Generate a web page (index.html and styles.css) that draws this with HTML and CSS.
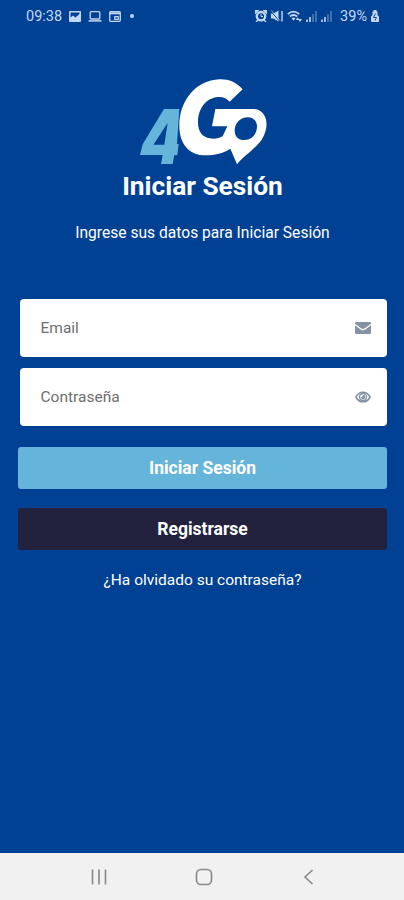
FILE: index.html
```html
<!DOCTYPE html>
<html lang="es">
<head>
    <title>4Go - Iniciar Sesión</title>
    <meta charset="UTF-8">
    <meta name="viewport" content="width=device-width, initial-scale=1.0">
    <link rel="stylesheet" href="styles.css">
</head>
<body>
    <header class="statusbar">
        <div class="status-left">
            <span class="clock">09:38</span>
            <svg width="12" height="11" viewBox="0 0 12 11">
                <path fill="currentColor" fill-rule="evenodd" d="M1 0h10a1 1 0 0 1 1 1v9a1 1 0 0 1-1 1H1a1 1 0 0 1-1-1V1a1 1 0 0 1 1-1zM1.500 6.500 4 4.500l2.500 2L10.500 3V1.500h-9z"/>
            </svg>
            <svg width="14" height="11" viewBox="0 0 14 11">
                <rect x="2.200" y=".7" width="9.600" height="7.300" rx="1" fill="none" stroke="currentColor" stroke-width="1.300"/>
                <path d="M.5 9.900h13" stroke="currentColor" stroke-width="1.500"/>
            </svg>
            <svg width="12" height="11" viewBox="0 0 12 11">
                <rect x=".7" y=".7" width="10.600" height="9.600" rx="1" fill="none" stroke="currentColor" stroke-width="1.300"/>
                <path d="M1 2.300h10" stroke="currentColor" stroke-width="2"/>
                <path d="M5.500 5.500h4v3h-4z" fill="currentColor" stroke="currentColor" fill-opacity=".4"/>
            </svg>
            <span class="dot"></span>
        </div>
        <div class="status-right">
            <svg width="12" height="12" viewBox="0 0 12 12">
                <path d="M0 0h3.500L0 3.500zM12 0H8.500L12 3.500zM1 12l2-2M11 12 9 10" fill="currentColor" stroke="currentColor" stroke-width="1.400"/>
                <circle cx="6" cy="6.200" r="4.200" fill="none" stroke="currentColor" stroke-width="2.400"/>
                <path d="M6 4v2.500h2" fill="none" stroke="currentColor"/>
            </svg>
            <svg width="12" height="12" viewBox="0 0 12 12">
                <path d="M0 3.500h2.500L7.500.5v11L2.500 8.500H0z" fill="currentColor"/>
                <path d="M0 1.500 8 10.500" stroke="#014193" stroke-width="1"/>
                <path d="M.3.500 9 10.500" stroke="currentColor" stroke-width=".8"/>
                <path d="M11 1v10.500" stroke="currentColor" stroke-width="1.400"/>
            </svg>
            <svg width="15" height="12" viewBox="0 0 15 12">
                <path d="M.8 4.200q5.700-5 11.400 0M2.800 6.500q3.700-3 7.400 0" fill="none" stroke="currentColor" stroke-width="1.700"/>
                <path d="M4.500 8.300q2-1.500 4 0l-2 2.500zM8.800 10l1.900-2.800L12.600 10zM11 9h4l-2 3z" fill="currentColor"/>
            </svg>
            <svg width="11" height="11" viewBox="0 0 11 11">
                <path d="M1 11V8.500M4 11V6" stroke="currentColor" stroke-width="1.600"/>
                <path d="M7 11V3M10 11V0" stroke="currentColor" stroke-width="1.600" opacity=".4"/>
            </svg>
            <svg width="11" height="11" viewBox="0 0 11 11">
                <path d="M1 11V8.500M4 11V6" stroke="currentColor" stroke-width="1.600"/>
                <path d="M7 11V3M10 11V0" stroke="currentColor" stroke-width="1.600" opacity=".4"/>
            </svg>
            <span class="battery-text">39%</span>
            <svg width="8" height="12" viewBox="0 0 8 12">
                <path d="M2.500 0h3v1.500h1V5L8 6.500V11a1 1 0 0 1-1 1H1a1 1 0 0 1-1-1V6.500L1.500 5V1.500h1z" fill="currentColor"/>
                <path d="M4.500 3.500 2.500 7.500h3L4 10.500" fill="none" stroke="#014193" stroke-width=".9"/>
            </svg>
        </div>
    </header>

    <main class="login">
        <svg class="logo" width="130" height="90" viewBox="54 36 390 270" role="img" aria-label="4Go">
            <path class="logo-four" fill-rule="evenodd" d="M132 132h46l-7 105h5l-4 33h-9l-5 27h-35l5-27H60l8-32zM143 174l-43 65h33z"/>
            <path class="logo-go" fill-rule="evenodd" d="M368 73C347 50 325 42 298 43C229 46 178 105 178 182C178 238 208 271 257 271C284 271 309 265 331 251L351 298C370 273 405 252 425 224C445 193 444 158 425 141C416 134 407 132 395 132H286L276 184H322L308 214C296 221 283 222 270 220C246 216 234 200 234 171C234 130 260 98 294 96C309 95 320 100 329 110zM411 184C411 209 394 225 373 225C355 225 344 214 344 197C344 174 362 157 383 157C400 157 411 168 411 184z"/>
        </svg>
        <h1 class="title">Iniciar Sesión</h1>
        <p class="subtitle">Ingrese sus datos para Iniciar Sesión</p>

        <form class="form">
            <label class="field">
                <input class="input" type="email" placeholder="Email">
                <svg width="16" height="12" viewBox="0 0 16 12">
                    <path fill="#8492a4" d="M1 0h14a1 1 0 0 1 1 1v.8L9.500 6.600Q8 7.500 6.500 6.600L0 1.800V1a1 1 0 0 1 1-1zM0 3.200l6 4.500q2 1.200 4 0l6-4.500V11a1 1 0 0 1-1 1H1a1 1 0 0 1-1-1z"/>
                </svg>
            </label>
            <label class="field">
                <input class="input" type="password" placeholder="Contraseña">
                <svg width="16" height="12" viewBox="0 0 16 12">
                    <path fill="none" stroke="#8492a4" stroke-width="1.600" d="M.9 6Q3.500 1.200 8 1.200T15.100 6Q12.500 10.800 8 10.800T.9 6z"/>
                    <circle cx="8" cy="6" r="3.500" fill="none" stroke="#8492a4" stroke-width="1.400"/>
                    <path fill="#8492a4" d="M8 3.800a2.200 2.200 0 1 1-2.200 2.400Q7.800 6.400 8 3.800z"/>
                </svg>
            </label>
            <button class="button primary" type="button">Iniciar Sesión</button>
            <button class="button dark" type="button">Registrarse</button>
        </form>
        <a class="forgot" href="#">¿Ha olvidado su contraseña?</a>
    </main>

    <nav class="navbar">
        <svg width="18" height="18" viewBox="0 0 18 18">
            <path d="M2.500 1.500v15M9 1.500v15M15.500 1.500v15"/>
        </svg>
        <svg width="18" height="18" viewBox="0 0 18 18">
            <rect x="1.500" y="1.500" width="15" height="15" rx="4.500"/>
        </svg>
        <svg width="18" height="18" viewBox="0 0 18 18">
            <path d="M12.500 2 5 9l7.500 7"/>
        </svg>
    </nav>
</body>
</html>
```

FILE: styles.css
```css
:root{
    --bg: #014193;
    --light: #65b5db;
    --dark: #22223f;
    --text: #ffffff;
    --status: #c3d8f4;
}

*{
    box-sizing: border-box;
}

html, body{
    height: 100%;
    margin: 0;
}

body{
    display: flex;
    flex-direction: column;
    background-color: var(--bg);
    color: var(--text);
    font-family: Roboto, "Liberation Sans", sans-serif;
}

svg{
    display: block;
    flex: none;
}

.statusbar{
    display: flex;
    justify-content: space-between;
    height: 32px;
    padding: 0 25px 0 26px;
    color: var(--status);
    font-size: 14.5px;
}

.status-left, .status-right{
    display: flex;
    align-items: center;
}

.status-left{
    gap: 7px;
}

.status-right{
    gap: 4px;
}

.dot{
    width: 4px;
    height: 4px;
    margin-left: 2px;
    border-radius: 50%;
    background-color: var(--status);
}

.battery-text{
    margin-left: 4px;
}

.login{
    flex: 1;
    display: flex;
    flex-direction: column;
    align-items: center;
    padding: 45px 17px 0 18px;
}

.logo-four{
    fill: var(--light);
}

.logo-go{
    fill: var(--text);
}

.title{
    margin: 3px 0 0;
    font-size: 26.3px;
    font-weight: 700;
    line-height: 32px;
}

.subtitle{
    margin: 21px 0 0;
    font-size: 15.6px;
    line-height: 20px;
}

.form{
    display: flex;
    flex-direction: column;
    width: 100%;
    margin-top: 56px;
}

.field{
    display: flex;
    align-items: center;
    height: 58px;
    margin: 0 0 11px 2px;
    padding: 0 16px 0 20.5px;
    border-radius: 4px;
    background-color: #ffffff;
}

.input{
    flex: 1;
    min-width: 0;
    padding: 0;
    border: none;
    outline: none;
    background: none;
    font: 15.5px Roboto, "Liberation Sans", sans-serif;
}

.input::placeholder{
    color: #6e6e6e;
    opacity: 1;
}

.button{
    height: 42px;
    padding: 0;
    border: none;
    border-radius: 3px;
    color: var(--text);
    font: 700 17.5px Roboto, "Liberation Sans", sans-serif;
}

.primary{
    margin-top: 10px;
    background-color: var(--light);
}

.dark{
    margin-top: 19px;
    background-color: var(--dark);
}

.forgot{
    margin-top: 20px;
    color: var(--text);
    font-size: 15.5px;
    line-height: 20px;
    text-decoration: none;
}

.navbar{
    display: flex;
    align-items: center;
    justify-content: center;
    gap: 87px;
    height: 47px;
    padding: 1px 0 0 4px;
    background-color: #f1f1f1;
}

.navbar svg{
    fill: none;
    stroke: #8c8c8c;
    stroke-width: 1.7;
}
```
